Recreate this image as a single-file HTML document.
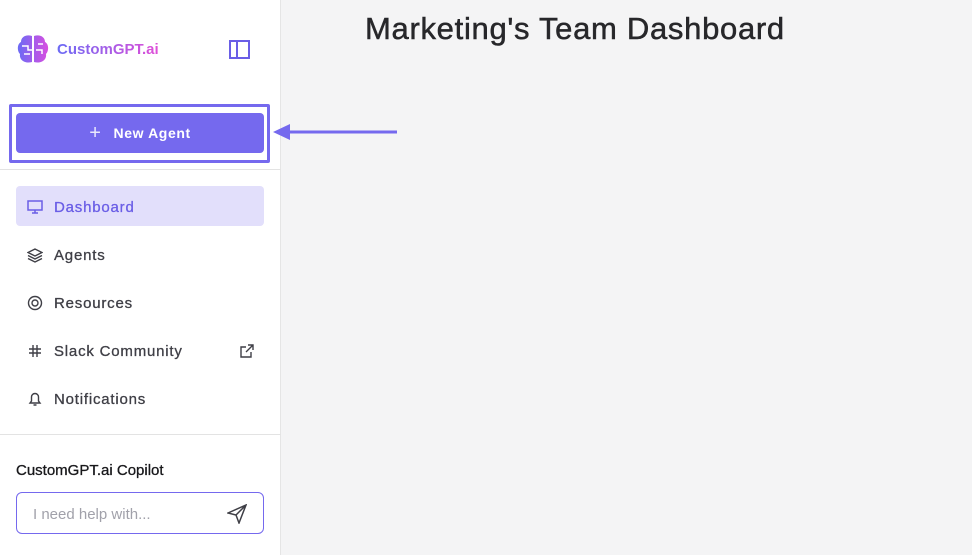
<!DOCTYPE html>
<html><head><style>
*{margin:0;padding:0;box-sizing:border-box}
body{width:972px;height:555px;background:#f4f4f5;font-family:"Liberation Sans",sans-serif;position:relative;overflow:hidden}
.side{position:absolute;left:0;top:0;width:281px;height:555px;background:#fff;border-right:1px solid #e5e5e5}
.logo{position:absolute;left:16px;top:34px;display:flex;align-items:center}
.logo span{font-weight:bold;font-size:15px;background:linear-gradient(90deg,#6b6bf5,#e04fd8);-webkit-background-clip:text;color:transparent;margin-left:7px}
.hl{position:absolute;left:9px;top:104px;width:261px;height:59px;border:3px solid #7569ee;border-radius:2px}
.btn{position:absolute;left:16px;top:113px;width:248px;height:40px;background:#7569ee;border-radius:4px;color:#fff;font-size:14px;font-weight:bold;letter-spacing:.6px;display:flex;align-items:center;justify-content:center}
.hr{position:absolute;left:0;width:281px;height:1px;background:#e3e3e3}
.item{position:absolute;left:16px;width:248px;height:40px;border-radius:4px;display:flex;align-items:center;padding-left:11px;padding-top:2px;font-size:15px;color:#3f3f46;letter-spacing:.8px;-webkit-text-stroke:.3px #3f3f46}
.item svg{margin-right:11px}
.act{background:#e2dffb;color:#6a5ee6;-webkit-text-stroke:.3px #6a5ee6}
.title{position:absolute;left:365px;top:11px;font-size:31px;color:#27272a;letter-spacing:.7px;-webkit-text-stroke:.5px #27272a}
.input{position:absolute;left:16px;top:492px;width:248px;height:42px;border:1px solid #7569ee;border-radius:6px;font-size:15px;color:#a1a1aa;padding:13px 16px}
</style></head><body>
<div class="side">
<div class="logo"><svg width="34" height="30" viewBox="0 0 34 30"><defs><linearGradient id="g" x1="0" x2="1"><stop offset="0" stop-color="#6b6bf5"/><stop offset="1" stop-color="#d84fe0"/></linearGradient></defs><path d="M16 2C10 0 5 3 5 8 1 10 1 17 4 20 3 26 9 30 16 28ZM18 2C24 0 29 3 29 8 33 10 33 17 30 20 31 26 25 30 18 28Z" fill="url(#g)"/><path d="M6 12h6v4h4M8 20h6M22 10h5M20 16h6v4" stroke="#fff" stroke-width="1.5" fill="none"/></svg><span>CustomGPT.ai</span></div>
<svg style="position:absolute;left:229px;top:40px" width="21" height="19"><rect x="1" y="1" width="19" height="17" fill="none" stroke="#6a5ee6" stroke-width="2"/><line x1="8" y1="1" x2="8" y2="18" stroke="#6a5ee6" stroke-width="2"/></svg>
<div class="hr" style="top:169px"></div>
<div class="item act" style="top:186px"><svg width="16" height="16" fill="none" stroke="#6a5ee6" stroke-width="1.5"><rect x="1" y="2" width="14" height="9"/><path d="M8 11v3M5 14h6"/></svg>Dashboard</div>
<div class="item" style="top:234px"><svg width="16" height="16" fill="none" stroke="#3f3f46" stroke-width="1.4"><path d="M8 2 1 5.5 8 9l7-3.5zM1 8.5 8 12l7-3.5M1 11.5 8 15l7-3.5"/></svg>Agents</div>
<div class="item" style="top:282px"><svg width="16" height="16" fill="none" stroke="#3f3f46" stroke-width="1.4"><circle cx="8" cy="8" r="6.5"/><circle cx="8" cy="8" r="3"/></svg>Resources</div>
<div class="item" style="top:330px"><svg width="16" height="16" fill="none" stroke="#3f3f46" stroke-width="1.4"><path d="M6 2v12M10 2v12M2 6h12M2 10h12"/></svg>Slack Community<svg style="position:absolute;left:224px" width="14" height="14" fill="none" stroke="#3f3f46" stroke-width="1.4"><path d="M11 8v5H1V3h5M8 1h5v5M13 1 6 8"/></svg></div>
<div class="item" style="top:378px"><svg width="16" height="16" fill="none" stroke="#3f3f46" stroke-width="1.4"><path d="M3 12h10l-1.5-2V6a3.5 3.5 0 0 0-7 0v4zM6.5 14h3"/></svg>Notifications</div>
<div class="hr" style="top:434px"></div>
<div style="position:absolute;left:16px;top:462px;font-size:15px;color:#18181b;-webkit-text-stroke:.3px #18181b">CustomGPT.ai Copilot</div>
<div class="input">I need help with...<svg style="position:absolute;right:16px;top:11px" width="20" height="20" fill="none" stroke="#3f3f46" stroke-width="1.5"><path d="M1 9 19 1 12 19 9 11zM9 11 19 1"/></svg></div>
</div>
<div class="hl"></div>
<div class="btn"><span style="font-weight:normal;font-size:20px;margin-right:12px;opacity:.85">+</span>New Agent</div>
<svg style="position:absolute;left:270px;top:122px" width="130" height="20"><path d="M3 10 20 2v16z" fill="#7569ee"/><line x1="15" y1="10" x2="127" y2="10" stroke="#7569ee" stroke-width="3"/></svg>
<div class="title">Marketing's Team Dashboard</div>
</body></html>
